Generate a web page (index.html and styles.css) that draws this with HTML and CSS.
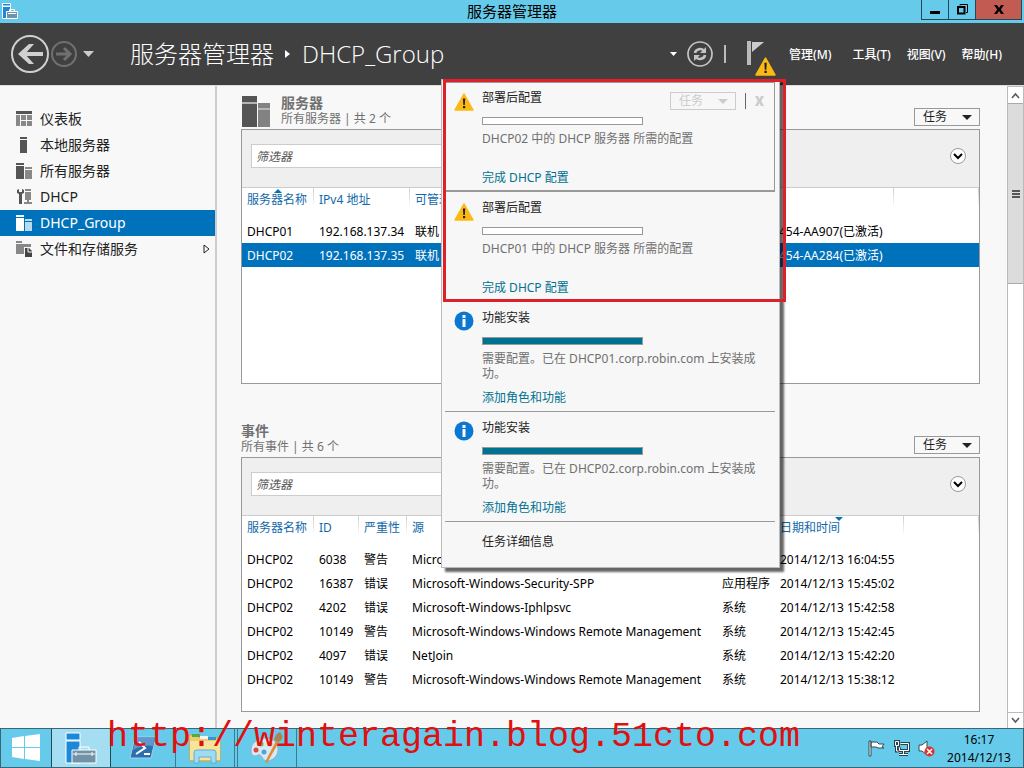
FILE: index.html
```html
<!DOCTYPE html>
<html lang="zh-CN">
<head>
<meta charset="utf-8">
<title>服务器管理器</title>
<link rel="stylesheet" href="styles.css">
</head>
<body>
<svg class="defs" aria-hidden="true">
  <symbol id="warn" viewBox="0 0 20 18"><path d="M10 1 19 17H1Z" fill="#fdb913" stroke="#fdb913" stroke-width="1.5" stroke-linejoin="round"/><path d="M8.9 5.5h2.3l-.4 6.5H9.300Z" fill="#222"/><rect x="9" y="13" width="2.200" height="2.200" fill="#222"/></symbol>
  <symbol id="info" viewBox="0 0 20 20"><circle cx="10" cy="10" r="9.500" fill="#0a78d0"/><path d="M8.500 4h3v3h-3zM8.500 8h3v8h-3z" fill="#fff"/></symbol>
  <symbol id="servers" viewBox="0 0 16 16"><path d="M0 0h8v2H0zM0 3h8v13H0z" fill="var(--a)"/><path d="M9 4h7v2H9zM9 7h7v9H9z" fill="var(--b)"/></symbol>
  <symbol id="manager" viewBox="0 0 32 32"><path d="M1 1h14v7H1zM1 9h14v22H1z" fill="#1e88d8" stroke="#fff"/><path d="M7 18h24v13H7z" fill="#7292a8" stroke="#fff"/><path d="M14 18v-3h10v3M8 22h22M11 20v4M27 20v4" fill="none" stroke="#fff"/></symbol>
  <symbol id="manager-small" viewBox="0 0 16 16"><path d="M.5.500h8V3h-8zM.5 3.500h8v12h-8z" fill="#1e88d8" stroke="#fff"/><path d="M4.500 8.500h11v7h-11z" fill="#7292a8" stroke="#fff"/><path d="M7.500 8.500v-2h5v2M6 10.500h8" fill="none" stroke="#fff"/></symbol>
</svg>

<header class="titlebar">
  <svg class="app-icon"><use href="#manager-small"/></svg>
  <h1>服务器管理器</h1>
  <div class="window-buttons">
    <button aria-label="最小化"><svg width="10" height="10"><path d="M0 6h10v3H0z"/></svg></button>
    <button aria-label="还原"><svg width="11" height="11" fill="none" stroke="#000"><path d="M3 1.500V.5h7.500v8H9"/><rect x="1" y="3" width="6.500" height="6.500" stroke-width="2"/></svg></button>
    <button class="close" aria-label="关闭"><svg width="10" height="9"><path d="M0 0h3l2 3 2-3h3L6.800 4.500 10 9H7L5 6 3 9H0l3.200-4.500Z"/></svg></button>
  </div>
</header>

<nav class="toolbar">
  <button class="back" aria-label="后退"><svg width="38" height="38" viewBox="0 0 38 38" fill="none" stroke="#d0d0d0"><circle cx="19" cy="19" r="18" stroke-width="2"/><path d="M32 19H11" stroke-width="4"/><path d="M18 9h5l-9 10 9 10h-5L7 19Z" fill="#d0d0d0" stroke="none"/></svg></button>
  <button class="forward" aria-label="前进"><svg width="26" height="26" viewBox="0 0 26 26" fill="none" stroke="#707070" stroke-width="2"><circle cx="13" cy="13" r="12"/><path d="M5 13h13M13 7l6 6-6 6" stroke-width="3"/></svg></button>
  <button class="history" aria-label="历史记录"><svg width="11" height="6"><path d="M0 0h11L5.500 6Z" fill="#ccc"/></svg></button>
  <div class="crumbs"><span>服务器管理器</span><svg width="6" height="10"><path d="M0 1l5 4-5 4Z" fill="#fff"/></svg><span>DHCP_Group</span></div>
  <button class="drop" aria-label="更多"><svg width="7" height="4"><path d="M0 0h7L3.500 4Z" fill="#fff"/></svg></button>
  <button aria-label="刷新"><svg width="26" height="26" viewBox="0 0 26 26" fill="none" stroke="#c4c4c4"><circle cx="13" cy="13" r="12" stroke-width="1.700"/><path d="M8 12c.5-4 7-5.500 9-2M18 14c-.5 4-7 5.500-9 2" stroke-width="2.500"/><path d="M19 6v6h-6zM7 20v-6h6z" fill="#c4c4c4" stroke="none"/></svg></button>
  <span class="divider"></span>
  <button class="flag" aria-label="通知"><svg width="30" height="36" viewBox="0 0 30 36"><path d="M1 1h4v24H1z" fill="#bbb"/><path d="M6 2h12L6 12Z" fill="#ccc"/><use href="#warn" x="9" y="17" width="21" height="19"/></svg></button>
  <div class="menus"><button>管理(M)</button><button>工具(T)</button><button>视图(V)</button><button>帮助(H)</button></div>

  <section class="notices">
    <article class="notice current">
      <svg class="warn"><use href="#warn"/></svg>
      <div class="notice-body">
        <h3>部署后配置</h3><div class="bar"></div>
        <p>DHCP02 中的 DHCP 服务器 所需的配置</p><a href="#">完成 DHCP 配置</a>
      </div>
      <div class="notice-tools"><button class="task" disabled>任务<svg width="10" height="5"><path d="M0 0h10L5 5Z"/></svg></button><span></span><button class="dismiss" aria-label="关闭"><svg width="9" height="10"><path d="M0 0h3l1.500 3L6 0h3L6.300 5 9 10H6L4.500 7 3 10H0l2.700-5Z" fill="#ccc"/></svg></button></div>
    </article>
    <article class="notice">
      <svg class="warn"><use href="#warn"/></svg>
      <div class="notice-body">
        <h3>部署后配置</h3><div class="bar"></div>
        <p>DHCP01 中的 DHCP 服务器 所需的配置</p><a href="#">完成 DHCP 配置</a>
      </div>
    </article>
    <article class="notice ruled">
      <svg class="info"><use href="#info"/></svg>
      <div class="notice-body">
        <h3>功能安装</h3><div class="bar full"></div>
        <p>需要配置。已在 DHCP01.corp.robin.com 上安装成功。</p><a href="#">添加角色和功能</a>
      </div>
    </article>
    <article class="notice ruled">
      <svg class="info"><use href="#info"/></svg>
      <div class="notice-body">
        <h3>功能安装</h3><div class="bar full"></div>
        <p>需要配置。已在 DHCP02.corp.robin.com 上安装成功。</p><a href="#">添加角色和功能</a>
      </div>
    </article>
    <button class="details">任务详细信息</button>
    <div class="highlight"></div>
  </section>
</nav>

<div class="workspace">
  <aside class="sidebar">
    <a href="#"><svg viewBox="0 0 16 16"><path d="M0 0h16v3H0z" fill="#555"/><path d="M0 4h4v11H0zM5 4h5v5H5zM11 4h5v5h-5zM5 10h5v5H5zM11 10h5v5h-5z" fill="#888"/></svg>仪表板</a>
    <a href="#"><svg viewBox="0 0 16 16"><path d="M4 0h7v2H4zM4 3h7v13H4z" fill="#555"/></svg>本地服务器</a>
    <a href="#"><svg><use href="#servers"/></svg>所有服务器</a>
    <a href="#"><svg viewBox="0 0 16 16"><path d="M1 1v3l2 1 0 10h3V5l2-1V1L6 0v3H3V0Z" fill="#555"/><path d="M9 0h6v2H9zM9 3h6v8H9zM11 11h2v2h3v2H8v-2h3z" fill="#888"/></svg>DHCP</a>
    <a href="#" class="selected"><svg><use href="#servers"/></svg>DHCP_Group</a>
    <a href="#"><svg viewBox="0 0 16 16"><path d="M0 0h6v2H0zM0 3h15v3H8v7H0z" fill="#888"/><path d="M9 7h4l3 3v6H9z" fill="#444"/><path d="M12 7v4h4" fill="none" stroke="#fff"/></svg>文件和存储服务<svg class="expand" viewBox="0 0 7 10"><path d="M1 1l5 4-5 4Z" fill="none" stroke="#222"/></svg></a>
  </aside>

  <main class="content">
    <section class="tile">
      <div class="tile-head">
        <svg class="tile-icon" viewBox="0 0 28 31"><path d="M0 0h15v6H0zM0 8h15v23H0z" fill="#555"/><path d="M0 6h15v2H0zM16 12h12v2H16z" fill="#b5b5b5"/><path d="M16 7h12v5H16zM16 14h12v17H16z" fill="#828282"/></svg>
        <div><h2>服务器</h2><p>所有服务器 | 共 2 个</p></div>
        <button class="task">任务<svg width="10" height="5"><path d="M0 0h10L5 5Z"/></svg></button>
      </div>
      <div class="panel">
        <div class="filter"><input type="text" placeholder="筛选器" aria-label="筛选服务器"><button class="chevron" aria-label="展开"><svg width="10" height="7"><path d="M1 1l4 4 4-4" fill="none" stroke="#000" stroke-width="2"/></svg></button></div>
        <table>
          <colgroup><col class="c-name"><col class="c-ip"><col class="c-manage"><col class="c-active"><col></colgroup>
          <thead><tr><th class="asc">服务器名称</th><th>IPv4 地址</th><th>可管理性</th><th></th><th></th></tr></thead>
          <tbody>
            <tr><td>DHCP01</td><td>192.168.137.34</td><td>联机</td><td class="key">454-AA907(已激活)</td><td></td></tr>
            <tr class="selected"><td>DHCP02</td><td>192.168.137.35</td><td>联机</td><td class="key">454-AA284(已激活)</td><td></td></tr>
          </tbody>
        </table>
      </div>
    </section>

    <section class="tile">
      <div class="tile-head events">
        <div><h2>事件</h2><p>所有事件 | 共 6 个</p></div>
        <button class="task">任务<svg width="10" height="5"><path d="M0 0h10L5 5Z"/></svg></button>
      </div>
      <div class="panel">
        <div class="filter"><input type="text" placeholder="筛选器" aria-label="筛选事件"><button class="chevron" aria-label="展开"><svg width="10" height="7"><path d="M1 1l4 4 4-4" fill="none" stroke="#000" stroke-width="2"/></svg></button></div>
        <table>
          <colgroup><col class="c-name"><col class="c-id"><col class="c-level"><col class="c-source"><col class="c-log"><col class="c-date"><col></colgroup>
          <thead><tr><th>服务器名称</th><th>ID</th><th>严重性</th><th>源</th><th></th><th class="desc">日期和时间</th><th></th></tr></thead>
          <tbody>
            <tr><td>DHCP02</td><td>6038</td><td>警告</td><td>Microsoft-Windows-LSA</td><td>系统</td><td>2014/12/13 16:04:55</td><td></td></tr>
            <tr><td>DHCP02</td><td>16387</td><td>错误</td><td>Microsoft-Windows-Security-SPP</td><td>应用程序</td><td>2014/12/13 15:45:02</td><td></td></tr>
            <tr><td>DHCP02</td><td>4202</td><td>错误</td><td>Microsoft-Windows-Iphlpsvc</td><td>系统</td><td>2014/12/13 15:42:58</td><td></td></tr>
            <tr><td>DHCP02</td><td>10149</td><td>警告</td><td>Microsoft-Windows-Windows Remote Management</td><td>系统</td><td>2014/12/13 15:42:45</td><td></td></tr>
            <tr><td>DHCP02</td><td>4097</td><td>错误</td><td>NetJoin</td><td>系统</td><td>2014/12/13 15:42:20</td><td></td></tr>
            <tr><td>DHCP02</td><td>10149</td><td>警告</td><td>Microsoft-Windows-Windows Remote Management</td><td>系统</td><td>2014/12/13 15:38:12</td><td></td></tr>
          </tbody>
        </table>
      </div>
    </section>
  </main>

  <div class="scrollbar" aria-hidden="true">
    <span class="arrow"><svg width="9" height="7"><path d="M1 6l3.500-4L8 6" fill="none" stroke="#555" stroke-width="1.500"/></svg></span>
    <span class="thumb"><svg width="8" height="8"><path d="M0 0h8v2H0zM0 3h8v2H0zM0 6h8v2H0z" fill="#555"/></svg></span>
    <span class="arrow last"><svg width="9" height="7"><path d="M1 1l3.500 4L8 1" fill="none" stroke="#555" stroke-width="1.500"/></svg></span>
  </div>
</div>

<footer class="taskbar">
  <button class="app start" aria-label="开始"><svg width="28" height="28" viewBox="0 0 28 28" fill="#fff"><path d="M0 4l12-2v11H0zM13 2l15-2v13H13zM0 14h12v11L0 23zM13 14h15v13l-15-2z"/></svg></button>
  <button class="app active" aria-label="服务器管理器"><svg width="32" height="32"><use href="#manager"/></svg></button>
  <button class="app" aria-label="PowerShell"><svg width="28" height="24" viewBox="0 0 28 24"><path d="M6 1h21l-5 21H1Z" fill="#2d6fae" stroke="#a8cfe8"/><path d="M7 2h19l-2 8q-10-2-20 4z" fill="#5c99cc"/><path d="M10 6l6 6-9 6M15 18h6" fill="none" stroke="#fff" stroke-width="2"/></svg></button>
  <button class="app open" aria-label="文件资源管理器"><svg width="34" height="32" viewBox="0 0 34 32"><path d="M1 3h9l2 3h19l1 3v20H2Z" fill="#e9ce72" stroke="#c8a94b"/><path d="M4 2h8v3H4z" fill="#53a847"/><path d="M12 4h8v3h-8z" fill="#f5f5f5"/><path d="M20 5h8v3h-8z" fill="#3695c9"/><path d="M2 9h30v19H2z" fill="#f8e39a"/><path d="M6 31V20q0-2 3-2h16q3 0 3 2v11h-5v-6H11v6Z" fill="#9edcf3" stroke="#5caed3"/></svg></button>
  <button class="app open paint" aria-label="画图"><svg width="34" height="32" viewBox="0 0 34 32"><path d="M14 6C7 6 1 12 1 18s3 7 7 5 4 6 9 6 12-5 11-13S21 6 14 6Z" fill="#d9e9f4" stroke="#8eb2cc"/><circle cx="11" cy="12" r="2.500" fill="#70ad47"/><circle cx="6" cy="18" r="2.500" fill="#d94b42"/><circle cx="14" cy="20" r="2.500" fill="#4aa5d8"/><circle cx="20" cy="12" r="2.500" fill="#e8ad31"/><path d="M26 9l3 1-12 21-2-1Z" fill="#df8b38"/><path d="M24 8q1-6 6-8l2 3q2 3-3 7z" fill="#a98352"/></svg></button>
  <div class="tray">
    <svg width="17" height="17" viewBox="0 0 17 17" fill="#fff" stroke="#344b55"><path d="M1 1h2v15H1zM3 2h6l2 2h5l-2 3 2 1h-6L8 7H3z"/></svg>
    <svg width="17" height="17" viewBox="0 0 17 17" fill="none" stroke="#29424c" stroke-width="3"><path d="M7.500 3.500h8v7h-9v-3M10.500 10.500v4M6 14.500h9M2.500 1.500h3v4h-3zM3.500 6v5h2"/><path d="M7.500 3.500h8v7h-9v-3M10.500 10.500v4M6 14.500h9M2.500 1.500h3v4h-3zM3.500 6v5h2" stroke="#fff" stroke-width="1"/></svg>
    <svg width="17" height="17" viewBox="0 0 17 17"><path d="M1 5h3l5-4v14l-5-4H1z" fill="#fff" stroke="#344b55"/><circle cx="11.500" cy="11.500" r="5" fill="#d9332e"/><path d="M9 9l5 5M14 9l-5 5" stroke="#fff" stroke-width="1.500"/></svg>
  </div>
  <time class="clock"><span>16:17</span><span>2014/12/13</span></time>
  <div class="watermark">http://winteragain.blog.51cto.com</div>
</footer>
</body>
</html>
```

FILE: styles.css
```css
* { box-sizing: border-box; }
body {
  margin: 0;
  min-height: 100vh;
  display: flex;
  flex-direction: column;
  background: #f8f8f8;
  color: #000;
  font: 12px/16px "Noto Sans", "Noto Sans CJK SC", sans-serif;
}
h1, h2, h3, p { margin: 0; font-weight: normal; }
a { text-decoration: none; }
button { margin: 0; padding: 0; border: 0; background: none; color: inherit; font: inherit; }
svg { display: block; flex: none; }
.defs { position: absolute; width: 0; height: 0; }

.titlebar { display: grid; grid-template-columns: 1fr auto 1fr; align-items: start; height: 23px; background: #66cbea; }
.titlebar h1 { font-size: 15px; line-height: 22px; }
.app-icon { width: 16px; height: 16px; margin: 3px 2px; }
.window-buttons { display: flex; justify-self: end; margin-right: 2px; border: solid #234754; border-width: 0 1px 1px; }
.window-buttons button { display: grid; place-items: center; width: 27px; height: 19px; border-right: 1px solid #234754; }
.window-buttons .close { width: 45px; border: 0; background: #c25b51; }

.toolbar { position: relative; display: flex; align-items: center; height: 62px; padding: 0 22px 0 11px; background: #404040; color: #fff; }
.back { margin-right: 2px; }
.history { margin: 0 36px 0 6px; }
.crumbs { display: flex; align-items: center; gap: 11px; flex: 1; font-size: 24px; line-height: 32px; font-weight: 300; white-space: nowrap; font-family: "Open Sans", "Noto Sans CJK SC", sans-serif; }
.drop { margin-right: 10px; }
.divider { width: 2px; height: 18px; margin: 0 20px 0 11px; background: #bbb; }
.flag { margin: 0 13px 0 0; }
.flag svg { margin-top: 7px; }
.menus { display: flex; gap: 21px; padding-top: 2px; font-weight: 500; }
.menus button + button + button { margin-left: -5px; }

.notices { position: absolute; z-index: 2; top: 56px; right: 244px; width: 339px; padding: 2px 3px 0; background: #f7f7f7; border: 1px solid #bbb; box-shadow: 4px 4px 2px rgba(0, 0, 0, 0.6); color: #222; }
.notice { display: flex; align-items: flex-start; min-height: 110px; padding: 8px 0 5px 9px; margin-right: 1px; }
.notice.current { border: solid #999; border-width: 1px 1px 2px 0; padding: 7px 0 4px 9px; }
.notice.ruled { border-bottom: 1px solid #999; }
.warn { width: 20px; height: 18px; margin-top: 3px; }
.info { width: 20px; height: 20px; margin-top: 1px; }
.notice-body { flex: 1; min-width: 0; padding-left: 8px; }
.notice h3 { font-size: 12px; line-height: 16px; }
.bar { width: 161px; height: 8px; margin: 11px 0 6px; border: 1px solid #999; background: #fff; }
.bar.full { background: #007291; }
.notice p { min-height: 30px; margin-right: 12px; line-height: 15px; color: #707070; }
.notice a { display: block; width: max-content; margin-top: 9px; color: #007291; }
.notice-tools { display: flex; align-items: center; gap: 9px; margin: 2px 10px 0 -94px; }
.notice-tools span { width: 1px; height: 16px; background: #666; }
.details { display: block; padding: 12px 0 17px 37px; }
.highlight { position: absolute; top: -1px; left: 1px; width: 343px; height: 223px; border: 3px solid #df2029; pointer-events: none; }
.task { display: flex; align-items: center; justify-content: space-between; width: 66px; height: 18px; padding: 0 7px 0 8px; border: 1px solid #999; color: #222; fill: #222; }
.task:disabled { border-color: #ccc; color: #ccc; fill: #ccc; }

.workspace { display: flex; flex: 1; border-top: 1px solid #ddd; }
.sidebar { width: 217px; padding-top: 20px; border-right: 2px solid #ccc; }
.sidebar a { display: flex; align-items: center; gap: 8px; height: 26px; padding: 0 5px 0 16px; color: #222; font-size: 14px; --a: #555; --b: #888; }
.sidebar svg { width: 16px; height: 16px; }
.sidebar a.selected { background: #0072bc; color: #fff; --a: #fff; --b: #b8daf0; }
.sidebar .expand { width: 7px; height: 10px; margin-left: auto; }

.content { display: flex; flex: 1; flex-direction: column; gap: 36px; min-width: 0; padding: 9px 27px 16px 24px; }
.tile-head { display: flex; align-items: flex-end; height: 34px; color: #707070; }
.tile-icon { width: 28px; height: 31px; margin: 0 11px 2px 1px; }
.tile-head h2 { font-size: 14px; line-height: 16px; font-weight: 700; color: #707070; }
.tile-head > div { margin-bottom: 2px; }
.tile-head .task { margin: 0 0 3px auto; }
.tile-head.events { height: 37px; }
.panel { min-height: 255px; border: 1px solid #999; background: #fff; }
.filter { display: flex; align-items: flex-start; justify-content: space-between; height: 58px; padding: 14px 13px 0 9px; border-bottom: 1px solid #ccc; background: #efefef; }
.filter input { width: 360px; height: 24px; padding: 0 4px; border: 1px solid #ccc; background: #fff; font: italic 12px/16px "Noto Sans", "Noto Sans CJK SC", sans-serif; }
.filter input::placeholder { color: #555; opacity: 1; }
.chevron { display: grid; place-items: center; width: 16px; height: 16px; margin-top: 4px; border: 1px solid #999; border-radius: 50%; background: #fff; }

table { width: 100%; border-collapse: collapse; table-layout: fixed; }
th { position: relative; height: 31px; padding: 0 5px 8px; text-align: left; font-weight: normal; color: #1268a8; white-space: nowrap; background: linear-gradient(#ccc, #fff) right top / 1px 20px no-repeat; }
td { height: 24px; padding: 2px 5px 0; white-space: nowrap; }
td.key { padding-left: 0; }
tr.selected { background: #0072bc; color: #fff; }
.asc::before, .desc::before { content: ""; position: absolute; top: 1px; border: solid transparent; border-width: 0 4px 4px; border-bottom-color: #0072bc; }
.asc::before { left: 32px; }
.desc::before { left: 60px; border-width: 4px 4px 0; border-top-color: #0072bc; }
.c-name { width: 72px; }
.c-ip { width: 96px; }
.c-manage { width: 369px; }
.c-active { width: 115px; }
.c-id { width: 45px; }
.c-level { width: 48px; }
.c-source { width: 310px; }
.c-log { width: 58px; }
.c-date { width: 129px; }

.scrollbar { display: flex; flex-direction: column; width: 17px; border: solid #bbb; border-width: 1px 1px 0; background: #fff; }
.arrow { display: grid; place-items: center; height: 16px; }
.arrow.last { margin-top: auto; border-top: 1px solid #bbb; }
.thumb { display: grid; place-items: center; height: 181px; border: solid #aaa; border-width: 1px 0; background: #dcdcdc; }

.taskbar { position: relative; display: flex; height: 40px; border: 1px solid #3b6676; background: #66cbea; }
.app { display: grid; place-items: center; width: 64px; }
.app.start { width: 50px; }
.app.active { width: 60px; border: solid #234754; border-width: 0 1px; background: #a5ddf2; }
.app.open { width: 60px; border: solid #3b7c93; border-width: 0 1px; }
.app.paint { margin-left: 2px; }
.tray { display: flex; align-items: center; gap: 8px; margin-left: auto; }
.clock { display: flex; flex-direction: column; justify-content: center; width: 88px; padding-top: 2px; text-align: center; line-height: 18px; }
.watermark { position: absolute; left: 106px; bottom: 10px; z-index: 3; color: #e01010; font: 35px/40px "Liberation Mono", monospace; white-space: nowrap; pointer-events: none; }
```
